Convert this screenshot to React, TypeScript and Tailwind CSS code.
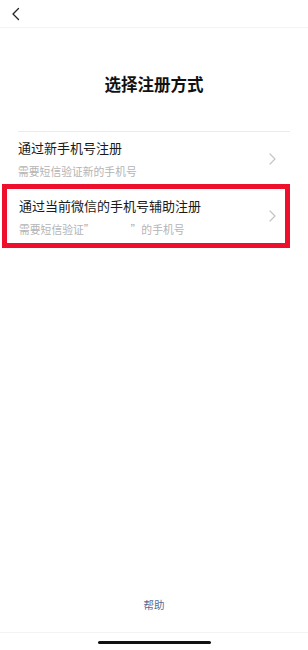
const font = { fontFamily: '"Noto Sans CJK SC", "Noto Sans", sans-serif' }

function Chevron({ className }: { className?: string }) {
  return (
    <svg width="7" height="12" viewBox="0 0 7 12" className={className} fill="none">
      <path d="M1 1l5 5-5 5" stroke="#c4c4c4" strokeWidth="1.2" strokeLinecap="round" strokeLinejoin="round" />
    </svg>
  )
}

export default function App() {
  return (
    <div className="flex h-[650px] w-[308px] flex-col bg-white" style={font}>
      <div className="flex h-[28px] shrink-0 items-center border-b border-[#f4f4f4] pl-[11px]">
        <svg width="9" height="14" viewBox="0 0 9 14" fill="none">
          <path d="M7.5 1.5L2 7l5.5 5.5" stroke="#222" strokeWidth="1.3" strokeLinecap="round" strokeLinejoin="round" />
        </svg>
      </div>

      <h1 className="mt-[44px] text-center text-[16.5px] leading-[24px] font-semibold text-[#111]">
        选择注册方式
      </h1>

      <div className="mt-[35px] px-[18px]">
        <div className="flex h-[53px] items-center border-t border-[#ebebeb]">
          <div className="flex-1 pt-[1px]">
            <div className="text-[13px] leading-[18px] text-[#1a1a1a]">通过新手机号注册</div>
            <div className="mt-[7px] text-[10.8px] leading-[14px] text-[#b4b4b4]">需要短信验证新的手机号</div>
          </div>
          <Chevron className="mr-[14px] mt-[2px]" />
        </div>

        <div className="-ml-[16px] flex h-[64px] items-center border-[5px] border-[#ee0f2c] bg-white">
          <div className="flex-1 pl-[12px] pt-[1px]">
            <div className="text-[13px] leading-[18px] text-[#1a1a1a]">通过当前微信的手机号辅助注册</div>
            <div className="mt-[7px] flex text-[10.8px] leading-[14px] text-[#b4b4b4]">
              <span>需要短信验证”</span>
              <span className="w-[36px]" />
              <span>”的手机号</span>
            </div>
          </div>
          <Chevron className="mr-[9px]" />
        </div>
      </div>

      <div className="flex-1" />

      <div className="pb-[20px] text-center text-[10.5px] leading-[14px] text-[#576b95]">帮助</div>

      <div className="flex h-[18px] shrink-0 justify-center border-t border-[#f3f3f3] pt-[8px]">
        <div className="h-[3px] w-[113px] rounded-full bg-[#111]" />
      </div>
    </div>
  )
}
